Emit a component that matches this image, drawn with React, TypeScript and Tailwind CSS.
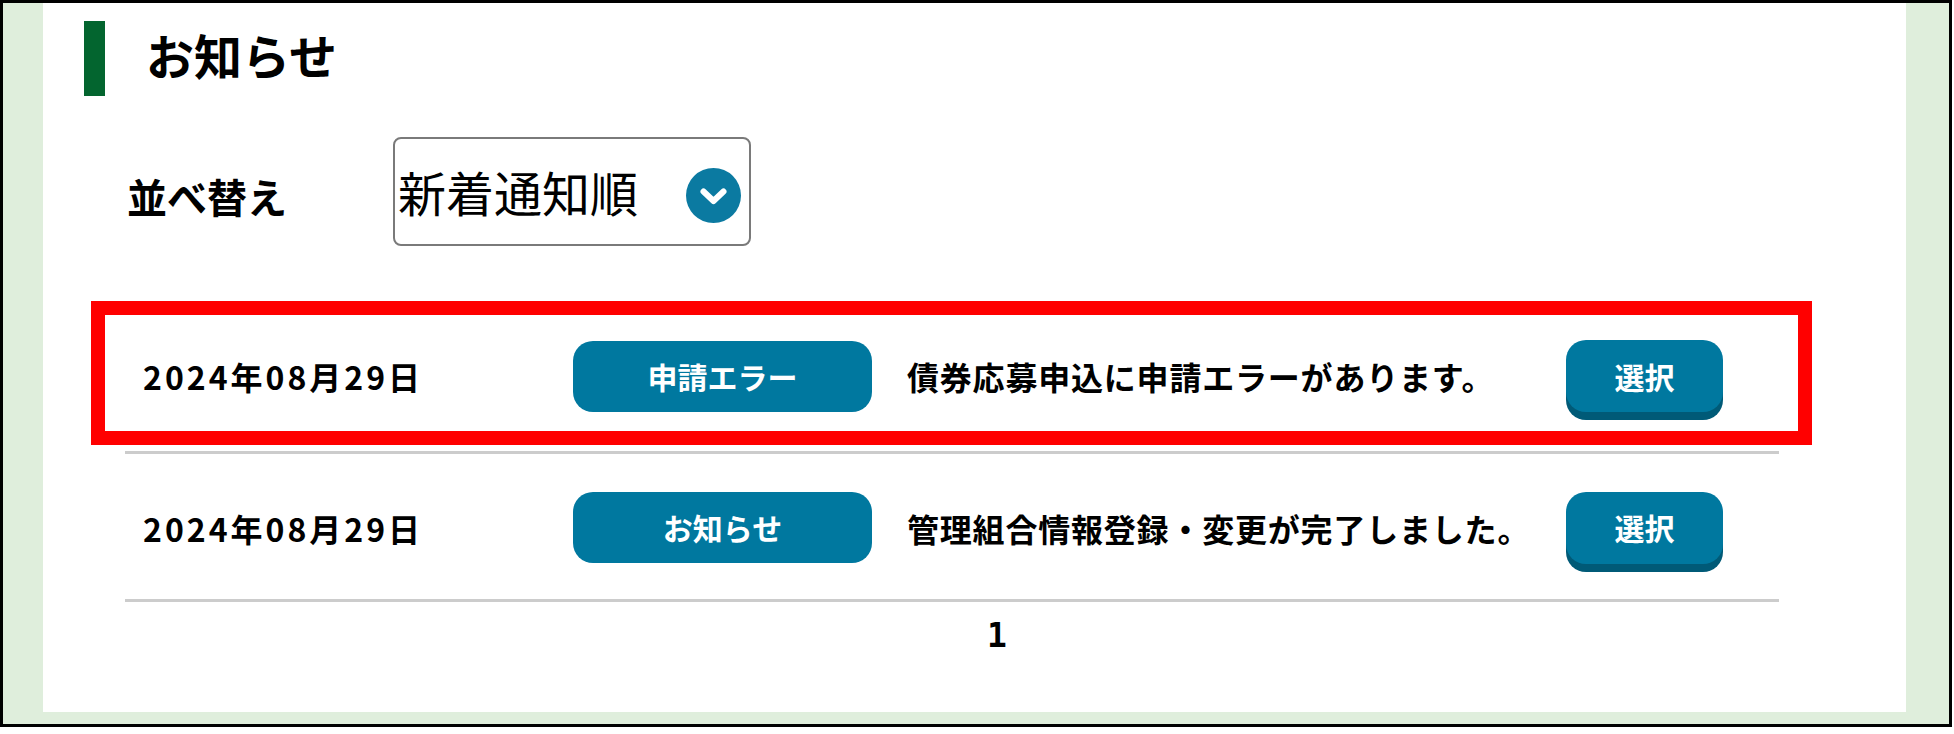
import React from 'react';

const jp = "font-['Noto_Sans_CJK_JP',sans-serif]";

interface Notice {
    date: string;
    kind: string;
    message: string;
    highlighted?: boolean;
}

const notices: Notice[] = [
    { date: '2024年08月29日', kind: '申請エラー', message: '債券応募申込に申請エラーがあります。', highlighted: true },
    { date: '2024年08月29日', kind: 'お知らせ', message: '管理組合情報登録・変更が完了しました。' },
];

const ChevronCircle = () => (
    <svg width="55" height="55" viewBox="0 0 55 55">
        <circle cx="27.5" cy="27.5" r="27.5" fill="#0b7aa1" />
        <path d="M17.5 23.5 L27.5 33 L37.5 23.5" fill="none" stroke="#ffffff" strokeWidth="6" strokeLinecap="round" strokeLinejoin="round" />
    </svg>
);

const NoticeRow: React.FC<{ notice: Notice }> = ({ notice }) => {
    // same columns for both rows, the red box only wraps the first one
    const content = (
        <div className="flex items-center w-[1654px]">
            <div className="w-[448px] pl-[18px] text-[32px] font-bold tracking-[3px] text-black leading-none">
                {notice.date}
            </div>
            <div className="w-[299px] h-[71px] rounded-[20px] bg-[#00789f] flex items-center justify-center text-white text-[30px] font-bold">
                {notice.kind}
            </div>
            <div className="w-[694px] pl-[35px] text-[32px] font-bold tracking-[0.8px] text-black leading-none whitespace-nowrap">
                {notice.message}
            </div>
            <button className="w-[157px] h-[72px] rounded-[20px] bg-[#00789f] shadow-[0_8px_0_#005a77] flex items-center justify-center text-white text-[30px] font-bold">
                選択
            </button>
        </div>
    );

    if (notice.highlighted) {
        return (
            <div className="-ml-[34px] -mr-[33px] h-[144px] border-[14px] border-[#ff0000] pl-[20px] pr-[19px] pt-[6px] flex items-center">
                {content}
            </div>
        );
    }
    return <div className="h-[145px] flex items-center pt-[2px]">{content}</div>;
};

export default function App() {
    return (
        <div className={`${jp} w-[1952px] h-[727px] border-[3px] border-black bg-[#dfeedc] pl-[40px] pr-[43px] pb-[12px] flex`}>
            <div className="flex-1 bg-white flex flex-col">
                {/* Heading */}
                <div className="flex items-start mt-[18px] ml-[41px]">
                    <div className="w-[21px] h-[75px] bg-[#03652f]" />
                    <h1 className="ml-[41px] text-[48px] font-bold leading-[67px] text-black">お知らせ</h1>
                </div>

                {/* Sort */}
                <div className="flex items-center ml-[84px] mt-[41px]">
                    <div className="w-[266px] pt-[8px] text-[40px] font-bold text-black leading-none">並べ替え</div>
                    <div className="w-[358px] h-[109px] border-2 border-[#7a7a7a] rounded-[8px] flex items-center justify-between pl-[3px] pr-[8px]">
                        <span className="text-[48px] leading-none text-black -mt-[2px]">新着通知順</span>
                        <div className="mt-[7px]">
                            <ChevronCircle />
                        </div>
                    </div>
                </div>

                {/* List */}
                <div className="ml-[82px] mt-[55px] w-[1654px] flex flex-col">
                    <NoticeRow notice={notices[0]} />
                    <div className="mt-[6px] h-[3px] bg-[#cccccc]" />
                    <NoticeRow notice={notices[1]} />
                    <div className="h-[3px] bg-[#cccccc]" />
                    <div className="mt-[14px] pl-[862px] font-['DejaVu_Sans_Mono',monospace] text-[33px] font-bold leading-[40px] text-black">
                        1
                    </div>
                </div>
            </div>
        </div>
    );
}
